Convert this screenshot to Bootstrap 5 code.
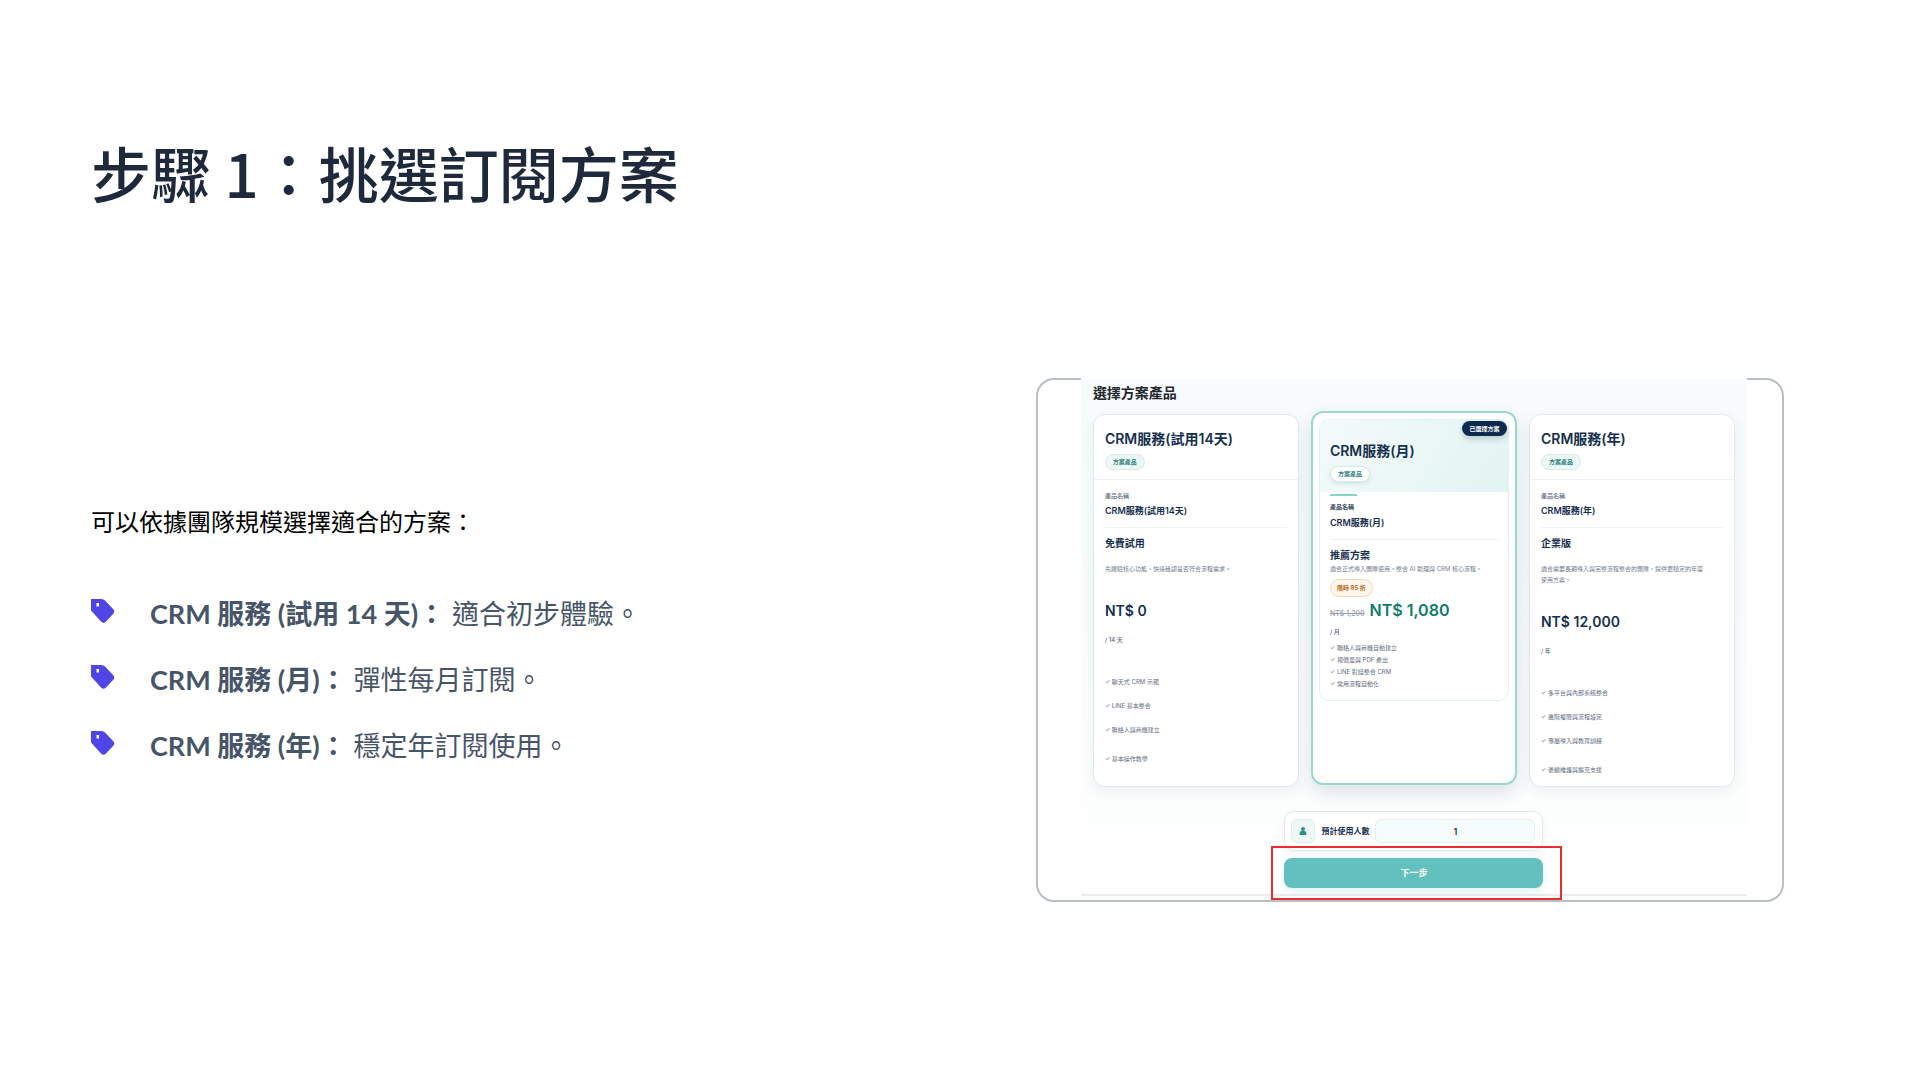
<!DOCTYPE html>
<html lang="zh-Hant">
<head>
<meta charset="utf-8">
<meta name="viewport" content="width=device-width, initial-scale=1">
<title>步驟 1：挑選訂閱方案</title>
<link href="https://cdn.jsdelivr.net/npm/bootstrap@5.3.0/dist/css/bootstrap.min.css" rel="stylesheet">
<style>
  body { font-family: Lato, "Noto Sans CJK TC", sans-serif; background: #fff; color: #000; }
  .slide { min-height: 100vh; padding: 136px 136px 60px 91px; }
  .slide-title { font-family: "Noto Sans CJK TC", sans-serif; font-size: 60px; line-height: 72px; font-weight: 500; color: #1e293b; margin-bottom: 170px; }
  .split { display: grid; grid-template-columns: minmax(0, 946fr) minmax(0, 749fr); }
  .copy { padding-top: 126px; }
  .intro { font-size: 24px; line-height: 36px; margin-bottom: 57px; }
  .points { font-size: 27px; line-height: 34px; color: #475569; gap: 32px; }
  .points li { gap: 35px; }
  .points svg { width: 24px; height: 24px; margin-top: 2px; flex: none; }

  .shot { border: 2px solid #b9bec7; border-radius: 18px; padding: 0 35px 4px 43px; font-family: Inter, "Noto Sans CJK TC", sans-serif; color: #16304f; }
  .panel { margin-top: -2px; padding: 5px 12px 6px; border-bottom: 2px solid #ececee; background: linear-gradient(#f7fbfc, #fdfefe 454px, #fff 454px); }
  .panel-title { font-size: 14px; line-height: 20px; font-weight: 700; color: #23272d; margin-bottom: 11px; }
  .plans { display: grid; grid-template-columns: repeat(3, minmax(0, 1fr)); gap: 12px; }
  .plan { background: #fff; border: 1px solid #e1e9ef; border-radius: 12px; box-shadow: 0 5px 14px rgba(30, 55, 90, .07); }
  .plan-head { padding: 15px 11px 9px; border-bottom: 1px solid #edf1f4; }
  .plan-body { padding: 12px 11px 10px; }
  .plan-name { font-size: 14px; line-height: 18px; font-weight: 600; margin: 0 0 6px; }
  .pill { display: block; width: 40px; height: 16px; font-size: 6px; line-height: 14px; font-weight: 700; text-align: center; border: 1px solid #d5ebe7; border-radius: 8px; background: #edf8f6; color: #2a8078; }
  .tag-label { font-size: 6px; line-height: 8px; font-weight: 500; color: #5d6b80; margin-bottom: 5px; }
  .product { font-size: 9px; line-height: 12px; font-weight: 600; padding-bottom: 10px; border-bottom: 1px solid #f0f3f6; margin-bottom: 8px; }
  .tier { font-size: 10px; line-height: 14px; font-weight: 700; margin: 0 0 13px; }
  .desc { font-size: 6px; line-height: 11px; color: #717c8c; margin-bottom: 27px; }
  .price { font-size: 14px; line-height: 20px; font-weight: 600; margin-bottom: 15px; }
  .unit { font-size: 6px; line-height: 8px; font-weight: 500; color: #56647a; margin-bottom: 32px; }
  .feats { font-size: 6px; line-height: 12px; color: #5f6c80; gap: 12px; font-weight: 400; }
  .feats li:last-child { margin-top: 5px; }

  .chosen { position: relative; margin: -3px 0 2px; border: 2px solid #9ad8cd; padding: 6px; box-shadow: 0 8px 18px rgba(30, 55, 90, .14); }
  .chosen-inner { border: 1px solid #e0f1ef; border-radius: 10px; overflow: hidden; }
  .chosen .plan-head { padding: 22px 10px 10px; border: 0; background: linear-gradient(120deg, #f3fbfa, #e2f4f2); }
  .chosen .plan-body { padding: 2px 10px 10px; }
  .chosen .plan-body::before { content: ""; display: block; width: 27px; height: 2px; background: #86d3c8; margin-bottom: 7px; }
  .chosen .pill { background: #fff; box-shadow: 0 2px 4px rgba(30, 80, 90, .12); }
  .chosen .tag-label { margin-bottom: 6px; color: #33435a; font-weight: 700; }
  .chosen .tier { margin-bottom: 1px; }
  .chosen .desc { margin-bottom: 5px; white-space: nowrap; }
  .chosen .pill.sale { width: 43px; height: 18px; line-height: 16px; border-radius: 9px; border-color: #f6d9b5; background: #fff5ea; color: #b4691f; box-shadow: none; margin-bottom: 3px; }
  .chosen .price { font-size: 16px; color: #117a6a; margin-bottom: 4px; gap: 5px; }
  .chosen .price del { font-size: 7px; font-weight: 500; color: #949eac; }
  .chosen .unit { margin-bottom: 6px; }
  .chosen .feats { gap: 0; }
  .chosen .feats li:last-child { margin-top: 0; }
  .chosen-flag { position: absolute; top: 8px; right: 8px; width: 45px; height: 15px; border-radius: 8px; background: #0f2a4f; color: #fff; font-size: 6px; line-height: 15px; font-weight: 700; text-align: center; box-shadow: 0 3px 6px rgba(15, 42, 79, .2); }

  .order { width: 259px; margin: 24px auto 0; }
  .seats { background: #fff; border: 1px solid #e3e9ef; border-radius: 10px; padding: 7px 7px 7px 6px; gap: 6px; box-shadow: 0 4px 10px rgba(30, 55, 90, .06); }
  .seats-icon { width: 24px; height: 24px; flex: none; border: 1px solid #dfefed; border-radius: 6px; background: #eef8f6; }
  .seats label { font-size: 8px; line-height: 24px; font-weight: 700; white-space: nowrap; }
  .seats input { height: 24px; min-width: 0; flex: 1; font-size: 9px; line-height: 12px; font-weight: 600; text-align: center; color: #16304f; padding: 0; border: 1px solid #e6efef; border-radius: 6px; background: #f6fbfb; }
  .step { position: relative; margin-top: 7px; }
  .step::after { content: ""; position: absolute; inset: -12px -19px -12px -13px; border: 2px solid #e62e2e; pointer-events: none; }
  .btn-next { height: 30px; width: 100%; display: block; padding: 0; font-size: 9px; line-height: 28px; font-weight: 700; color: #fff; background: #62c1bf; border: 0; border-radius: 8px; box-shadow: 0 4px 8px rgba(98, 193, 191, .18); }
  .btn-next:hover { background: #52b1af; color: #fff; }
</style>
</head>
<body>
<svg class="d-none" aria-hidden="true">
  <symbol id="tag" viewBox="0 0 24 24"><path fill="#4f46e5" fill-rule="evenodd" d="M0 0H10.500Q12.500 0 14 1.500L22.500 10.500Q24 12.500 22.500 14.500L14.500 23Q12.500 24.500 10.500 23L0 11.500ZM5.500 4V7.500H8V4Z"/></symbol>
</svg>
<main class="slide">
  <h1 class="slide-title">步驟 1：挑選訂閱方案</h1>
  <div class="split">
    <section class="copy">
      <p class="intro">可以依據團隊規模選擇適合的方案：</p>
      <ul class="points list-unstyled d-flex flex-column mb-0">
        <li class="d-flex"><svg aria-hidden="true"><use href="#tag"/></svg><span><strong>CRM 服務 (試用 14 天)：</strong> 適合初步體驗。</span></li>
        <li class="d-flex"><svg aria-hidden="true"><use href="#tag"/></svg><span><strong>CRM 服務 (月)：</strong> 彈性每月訂閱。</span></li>
        <li class="d-flex"><svg aria-hidden="true"><use href="#tag"/></svg><span><strong>CRM 服務 (年)：</strong> 穩定年訂閱使用。</span></li>
      </ul>
    </section>

    <section class="shot">
      <div class="panel">
        <h2 class="panel-title">選擇方案產品</h2>
        <div class="plans">
          <article class="plan">
            <div class="plan-head"><h3 class="plan-name">CRM服務(試用14天)</h3><span class="pill">方案產品</span></div>
            <div class="plan-body">
              <div class="tag-label">產品名稱</div>
              <div class="product">CRM服務(試用14天)</div>
              <h4 class="tier">免費試用</h4>
              <p class="desc">先體驗核心功能，快速確認是否符合流程需求。</p>
              <div class="price">NT$ 0</div>
              <div class="unit">/ 14 天</div>
              <ul class="feats list-unstyled d-flex flex-column mb-0">
                <li>✓ 聊天式 CRM 示範</li><li>✓ LINE 基本整合</li><li>✓ 聯絡人與商機建立</li><li>✓ 基本操作教學</li>
              </ul>
            </div>
          </article>

          <article class="plan chosen">
            <div class="chosen-inner">
              <div class="plan-head"><h3 class="plan-name">CRM服務(月)</h3><span class="pill">方案產品</span></div>
              <div class="plan-body">
                <div class="tag-label">產品名稱</div>
                <div class="product">CRM服務(月)</div>
                <h4 class="tier">推薦方案</h4>
                <p class="desc">適合正式導入團隊使用，整合 AI 助理與 CRM 核心流程。</p>
                <span class="pill sale">限時 85 折</span>
                <div class="price d-flex align-items-baseline"><del>NT$ 1,200</del><span>NT$ 1,080</span></div>
                <div class="unit">/ 月</div>
                <ul class="feats list-unstyled d-flex flex-column mb-0">
                  <li>✓ 聯絡人與商機自動建立</li><li>✓ 報價單與 PDF 產出</li><li>✓ LINE 對話整合 CRM</li><li>✓ 常用流程自動化</li>
                </ul>
              </div>
            </div>
            <span class="chosen-flag">已選擇方案</span>
          </article>

          <article class="plan">
            <div class="plan-head"><h3 class="plan-name">CRM服務(年)</h3><span class="pill">方案產品</span></div>
            <div class="plan-body">
              <div class="tag-label">產品名稱</div>
              <div class="product">CRM服務(年)</div>
              <h4 class="tier">企業版</h4>
              <p class="desc">適合需要長期導入與完整流程整合的團隊，提供更穩定的年度<br>使用方案。</p>
              <div class="price">NT$ 12,000</div>
              <div class="unit">/ 年</div>
              <ul class="feats list-unstyled d-flex flex-column mb-0">
                <li>✓ 多平台與內部系統整合</li><li>✓ 進階權限與流程設定</li><li>✓ 專屬導入與教育訓練</li><li>✓ 後續維護與擴充支援</li>
              </ul>
            </div>
          </article>
        </div>

        <form class="order">
          <div class="seats d-flex align-items-center">
            <span class="seats-icon d-flex align-items-center justify-content-center"><svg width="8" height="8" viewBox="0 0 8 8" fill="#2a9187" aria-hidden="true"><circle cx="4" cy="2" r="2"/><path d="M1 8Q.5 8 .5 7.200Q.5 4.300 2.600 3.800H5.400Q7.500 4.300 7.500 7.200Q7.500 8 7 8Z"/></svg></span>
            <label for="seats">預計使用人數</label>
            <input id="seats" type="text" inputmode="numeric" value="1">
          </div>
          <div class="step"><button class="btn btn-next" type="button">下一步</button></div>
        </form>
      </div>
    </section>
  </div>
</main>
<script src="https://cdn.jsdelivr.net/npm/bootstrap@5.3.0/dist/js/bootstrap.bundle.min.js"></script>
</body>
</html>
